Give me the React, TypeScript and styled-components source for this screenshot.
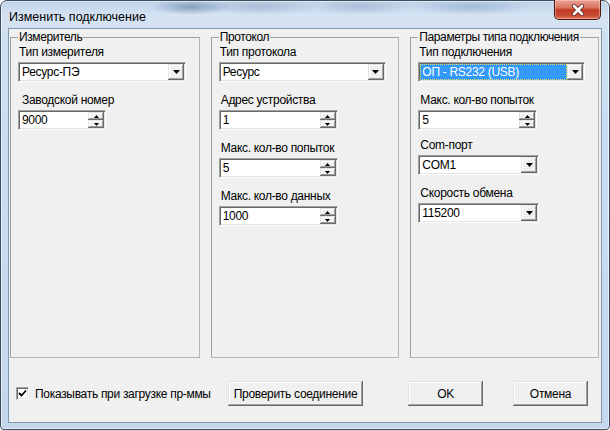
import styled, { createGlobalStyle } from 'styled-components';

const Global = createGlobalStyle`
  html, body {
    margin: 0;
    padding: 0;
    background: #ffffff;
  }
  body {
    font-family: 'Liberation Sans', Arial, sans-serif;
    color: #000;
  }
`;

const Window = styled.div`
  box-sizing: border-box;
  width: 610px;
  height: 430px;
  display: flex;
  flex-direction: column;
  padding: 0 7px 6px 7px;
  border: 1px solid #3d4d60;
  border-radius: 7px 7px 4px 4px;
  background:
    radial-gradient(ellipse 40px 8px at 190px 6px, rgba(60, 90, 130, 0.45), transparent),
    radial-gradient(ellipse 60px 8px at 260px 6px, rgba(120, 140, 170, 0.35), transparent),
    radial-gradient(ellipse 50px 8px at 360px 6px, rgba(120, 140, 170, 0.35), transparent),
    radial-gradient(ellipse 60px 8px at 470px 6px, rgba(100, 130, 170, 0.35), transparent),
    linear-gradient(180deg, #bcd2ea 0%, #d5e3f2 14px, #cddff1 40px, #c3d7ed 100%);
  box-shadow: inset 0 0 0 1px rgba(255, 255, 255, 0.55);
`;

const TitleBar = styled.div`
  height: 27px;
  display: flex;
  align-items: flex-start;
`;

const Title = styled.div`
  margin: 9px 0 0 1px;
  font-size: 12.5px;
  line-height: 14px;
  color: #000;
`;

const CloseButton = styled.div`
  margin: -1px 1px 0 auto;
  width: 47px;
  height: 20px;
  box-sizing: border-box;
  display: flex;
  align-items: center;
  justify-content: center;
  border: 1px solid #4e150d;
  border-top: none;
  border-radius: 0 0 5px 5px;
  background: linear-gradient(180deg, #e9a294 0%, #d9725f 42%, #c23a22 52%, #c84a30 80%, #d8735a 100%);
  box-shadow: inset 0 0 0 1px rgba(255, 220, 210, 0.45);
`;

const Client = styled.div`
  flex: 1;
  box-sizing: border-box;
  display: flex;
  flex-direction: column;
  padding: 1px 2px 0 1px;
  background: #f0f0f0;
  border: 1px solid #8597ad;
`;

const Groups = styled.div`
  display: flex;
  gap: 11px;
`;

const Group = styled.fieldset<{ $w: number }>`
  box-sizing: border-box;
  width: ${({ $w }) => $w}px;
  height: 328px;
  margin: 0;
  padding: 0 7px;
  border: 1px solid #a0a0a0;
  border-right-color: #b4b4b4;
  border-bottom-color: #b4b4b4;
  display: flex;
  flex-direction: column;
  align-items: flex-start;
`;

const Legend = styled.legend`
  padding: 0 1px;
  margin: 0;
  font-size: 12px;
  line-height: 14px;
  letter-spacing: -0.4px;
`;

const Field = styled.div<{ $mt: number }>`
  margin-top: ${({ $mt }) => $mt}px;
  display: flex;
  flex-direction: column;
  align-items: flex-start;
  gap: 3px;
`;

const Label = styled.div<{ $indent?: number }>`
  padding-left: ${({ $indent }) => $indent ?? 1}px;
  font-size: 12px;
  line-height: 14px;
  letter-spacing: -0.3px;
  white-space: nowrap;
`;

const Sunken = styled.div<{ $w: number }>`
  box-sizing: border-box;
  width: ${({ $w }) => $w}px;
  height: 20px;
  display: flex;
  padding: 1px;
  background: #ffffff;
  border: 1px solid;
  border-color: #a0a0a0 #ffffff #ffffff #a0a0a0;
  box-shadow: inset 1px 1px 0 #696969, inset -1px -1px 0 #e3e3e3;
`;

const ValueText = styled.div<{ $selected?: boolean }>`
  flex: 1;
  display: flex;
  align-items: center;
  padding-left: 2px;
  font-size: 12px;
  letter-spacing: -0.3px;
  white-space: nowrap;
  background: ${({ $selected }) => ($selected ? '#3399ff' : 'transparent')};
  color: ${({ $selected }) => ($selected ? '#ffffff' : '#000000')};
  outline: ${({ $selected }) => ($selected ? '1px dotted #e8e870' : 'none')};
  outline-offset: -1px;
`;

const raised = `
  background: #f0f0f0;
  box-shadow:
    inset -1px -1px 0 #696969,
    inset 1px 1px 0 #e3e3e3,
    inset -2px -2px 0 #a0a0a0,
    inset 2px 2px 0 #ffffff;
`;

const DropButton = styled.div`
  width: 16px;
  display: flex;
  align-items: center;
  justify-content: center;
  ${raised}
`;

const SpinColumn = styled.div`
  width: 16px;
  display: flex;
  flex-direction: column;
`;

const SpinHalf = styled.div`
  flex: 1;
  display: flex;
  align-items: center;
  justify-content: center;
  ${raised}
`;

const Bottom = styled.div`
  margin-top: 23px;
  height: 25px;
  display: flex;
  align-items: center;
`;

const CheckRow = styled.label`
  box-sizing: border-box;
  width: 218px;
  padding-left: 6px;
  display: flex;
  align-items: center;
  gap: 6px;
  font-size: 12px;
  letter-spacing: -0.3px;
  white-space: nowrap;
`;

const CheckBox = styled.div`
  box-sizing: border-box;
  width: 13px;
  height: 13px;
  display: flex;
  align-items: center;
  justify-content: center;
  background: #ffffff;
  border: 1px solid;
  border-color: #a0a0a0 #ffffff #ffffff #a0a0a0;
  box-shadow: inset 1px 1px 0 #696969, inset -1px -1px 0 #e3e3e3;
`;

const Button = styled.div<{ $w: number; $ml?: number }>`
  box-sizing: border-box;
  width: ${({ $w }) => $w}px;
  height: 25px;
  margin-left: ${({ $ml }) => $ml ?? 0}px;
  display: flex;
  align-items: center;
  justify-content: center;
  font-size: 12px;
  letter-spacing: -0.3px;
  ${raised}
`;

const DownArrow = () => (
  <svg width="7" height="4" viewBox="0 0 7 4">
    <polygon points="0,0 7,0 3.5,4" fill="#000" />
  </svg>
);

const SmallArrow = ({ up }: { up?: boolean }) => (
  <svg width="5" height="3" viewBox="0 0 5 3">
    <polygon points={up ? '0,3 5,3 2.5,0' : '0,0 5,0 2.5,3'} fill="#000" />
  </svg>
);

function ComboBox({ value, width, selected }: { value: string; width: number; selected?: boolean }) {
  return (
    <Sunken $w={width}>
      <ValueText $selected={selected}>{value}</ValueText>
      <DropButton>
        <DownArrow />
      </DropButton>
    </Sunken>
  );
}

function SpinEdit({ value, width }: { value: string; width: number }) {
  return (
    <Sunken $w={width}>
      <ValueText>{value}</ValueText>
      <SpinColumn>
        <SpinHalf>
          <SmallArrow up />
        </SpinHalf>
        <SpinHalf>
          <SmallArrow />
        </SpinHalf>
      </SpinColumn>
    </Sunken>
  );
}

export default function App() {
  return (
    <>
      <Global />
      <Window>
        <TitleBar>
          <Title>Изменить подключение</Title>
          <CloseButton>
            <svg width="14" height="12" viewBox="0 0 14 12">
              <path d="M3 2 L11 10 M11 2 L3 10" stroke="#5a2018" strokeWidth="4.2" strokeLinecap="round" />
              <path d="M3 2 L11 10 M11 2 L3 10" stroke="#ffffff" strokeWidth="2.6" strokeLinecap="round" />
            </svg>
          </CloseButton>
        </TitleBar>

        <Client>
          <Groups>
            <Group $w={190}>
              <Legend>Измеритель</Legend>
              <Field $mt={1}>
                <Label>Тип измерителя</Label>
                <ComboBox value="Ресурс-ПЭ" width={168} />
              </Field>
              <Field $mt={11}>
                <Label $indent={4}>Заводской номер</Label>
                <SpinEdit value="9000" width={88} />
              </Field>
            </Group>

            <Group $w={189}>
              <Legend>Протокол</Legend>
              <Field $mt={1}>
                <Label>Тип протокола</Label>
                <ComboBox value="Ресурс" width={167} />
              </Field>
              <Field $mt={11}>
                <Label $indent={2}>Адрес устройства</Label>
                <SpinEdit value="1" width={119} />
              </Field>
              <Field $mt={11}>
                <Label $indent={2}>Макс. кол-во попыток</Label>
                <SpinEdit value="5" width={119} />
              </Field>
              <Field $mt={11}>
                <Label $indent={2}>Макс. кол-во данных</Label>
                <SpinEdit value="1000" width={119} />
              </Field>
            </Group>

            <Group $w={189}>
              <Legend>Параметры типа подключения</Legend>
              <Field $mt={1}>
                <Label>Тип подключения</Label>
                <ComboBox value="ОП - RS232 (USB)" width={167} selected />
              </Field>
              <Field $mt={11}>
                <Label $indent={2}>Макс. кол-во попыток</Label>
                <SpinEdit value="5" width={119} />
              </Field>
              <Field $mt={8}>
                <Label $indent={2}>Com-порт</Label>
                <ComboBox value="COM1" width={121} />
              </Field>
              <Field $mt={11}>
                <Label $indent={2}>Скорость обмена</Label>
                <ComboBox value="115200" width={121} />
              </Field>
            </Group>
          </Groups>

          <Bottom>
            <CheckRow>
              <CheckBox>
                <svg width="9" height="9" viewBox="0 0 9 9">
                  <path d="M1 4 L3.5 6.5 L8 1.5" stroke="#000" strokeWidth="1.8" fill="none" />
                </svg>
              </CheckBox>
              Показывать при загрузке пр-ммы
            </CheckRow>
            <Button $w={135}>Проверить соединение</Button>
            <Button $w={75} $ml={45}>OK</Button>
            <Button $w={75} $ml={30}>Отмена</Button>
          </Bottom>
        </Client>
      </Window>
    </>
  );
}
